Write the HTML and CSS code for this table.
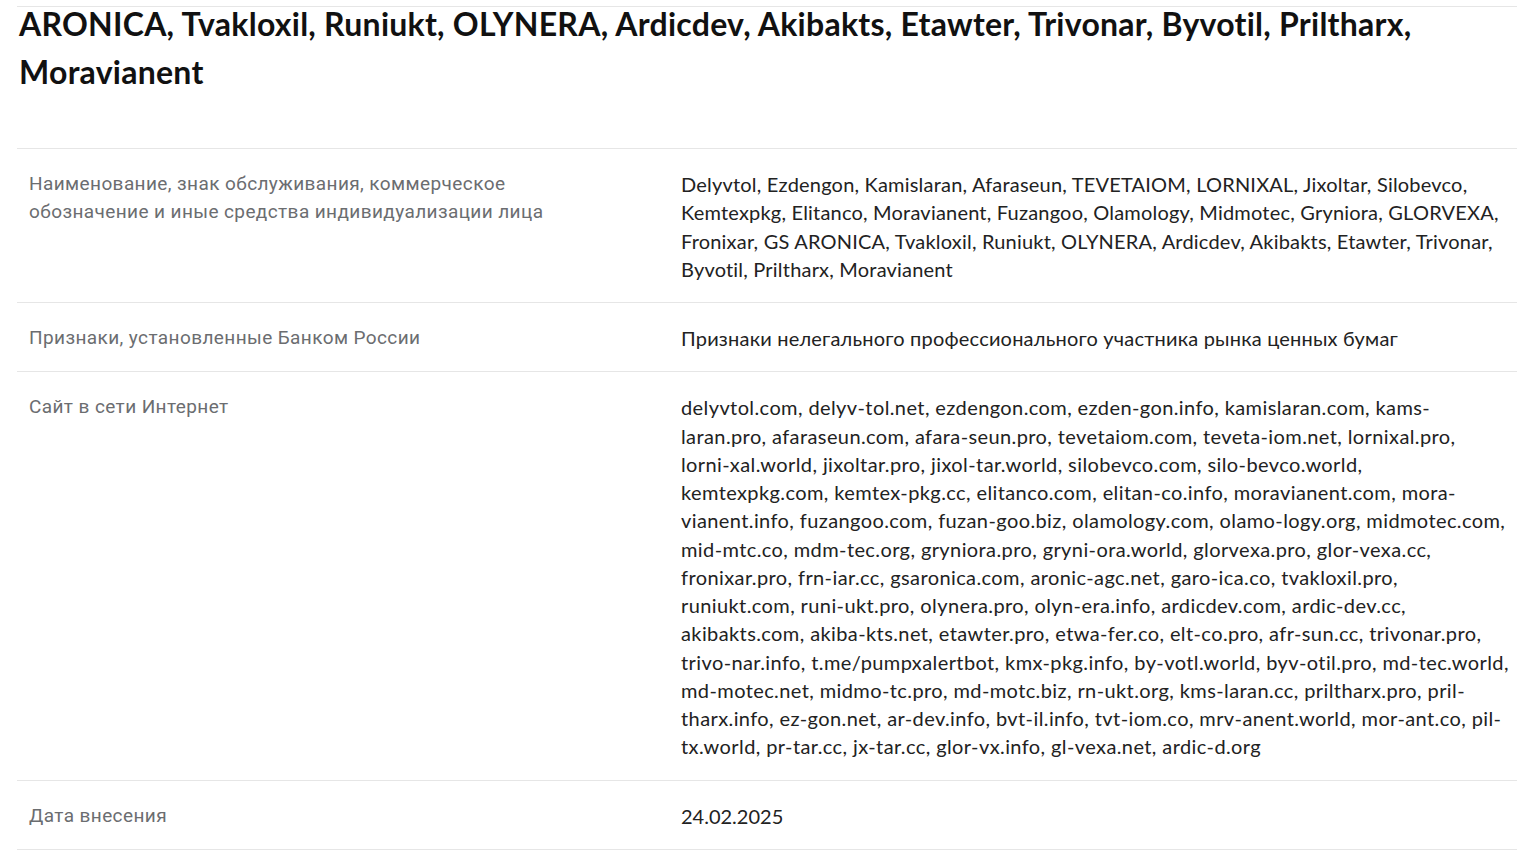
FILE: index.html
```html
<html>
<head>
	<title>Реестр</title>
	<link rel="stylesheet" href="styles.css">
</head>
<body>
	<div class="card">
		<h1 class="card-title">ARONICA, Tvakloxil, Runiukt, OLYNERA, Ardicdev, Akibakts, Etawter, Trivonar, Byvotil, Priltharx, Moravianent</h1>
		<div class="info">
			<div class="info-row">
				<div class="info-label">Наименование, знак обслуживания, коммерческое обозначение и иные средства индивидуализации лица</div>
				<div class="info-value">Delyvtol, Ezdengon, Kamislaran, Afaraseun, TEVETAIOM, LORNIXAL, Jixoltar, Silobevco, Kemtexpkg, Elitanco, Moravianent, Fuzangoo, Olamology, Midmotec, Gryniora, GLORVEXA, Fronixar, GS ARONICA, Tvakloxil, Runiukt, OLYNERA, Ardicdev, Akibakts, Etawter, Trivonar, Byvotil, Priltharx, Moravianent</div>
			</div>
			<div class="info-row">
				<div class="info-label">Признаки, установленные Банком России</div>
				<div class="info-value">Признаки нелегального профессионального участника рынка ценных бумаг</div>
			</div>
			<div class="info-row">
				<div class="info-label">Сайт в сети Интернет</div>
				<div class="info-value sites">delyvtol.com, delyv-tol.net, ezdengon.com, ezden-gon.info, kamislaran.com, kams-laran.pro, afaraseun.com, afara-seun.pro, tevetaiom.com, teveta-iom.net, lornixal.pro, lorni-xal.world, jixoltar.pro, jixol-tar.world, silobevco.com, silo-bevco.world, kemtexpkg.com, kemtex-pkg.cc, elitanco.com, elitan-co.info, moravianent.com, mora-vianent.info, fuzangoo.com, fuzan-goo.biz, olamology.com, olamo-logy.org, midmotec.com, mid-mtc.co, mdm-tec.org, gryniora.pro, gryni-ora.world, glorvexa.pro, glor-vexa.cc, fronixar.pro, frn-iar.cc, gsaronica.com, aronic-agc.net, garo-ica.co, tvakloxil.pro, runiukt.com, runi-ukt.pro, olynera.pro, olyn-era.info, ardicdev.com, ardic-dev.cc, akibakts.com, akiba-kts.net, etawter.pro, etwa-fer.co, elt-co.pro, afr-sun.cc, trivonar.pro, trivo-nar.info, t.me/pumpxalertbot, kmx-pkg.info, by-votl.world, byv-otil.pro, md-tec.world, md-motec.net, midmo-tc.pro, md-motc.biz, rn-ukt.org, kms-laran.cc, priltharx.pro, pril-tharx.info, ez-gon.net, ar-dev.info, bvt-il.info, tvt-iom.co, mrv-anent.world, mor-ant.co, pil-tx.world, pr-tar.cc, jx-tar.cc, glor-vx.info, gl-vexa.net, ardic-d.org</div>
			</div>
			<div class="info-row">
				<div class="info-label">Дата внесения</div>
				<div class="info-value date">24.02.2025</div>
			</div>
		</div>
	</div>
</body>
</html>
```
FILE: styles.css
```css
body {
	margin: 0;
	background: #fff;
	font-family: "Lato", "Noto Sans", sans-serif;
	color: #222;
}

.card {
	width: 1500px;
	margin: 6px 0 0 17px;
	border-top: 1px solid #e6e6e6;
}

.card-title {
	margin: -7px 0 52px 0;
	padding-left: 2px;
	font-size: 32px;
	line-height: 48px;
	font-weight: 700;
	letter-spacing: 0.25px;
	color: #111;
}

.info-row {
	display: grid;
	grid-template-columns: 652px 1fr;
	padding: 21px 7px 19px 12px;
	border-top: 1px solid #e6e6e6;
	line-height: 28.25px;
}

.info-row:last-child {
	border-bottom: 1px solid #e6e6e6;
}

.info-label {
	font-family: "Roboto", sans-serif;
	font-size: 19px;
	letter-spacing: 0.4px;
	color: #6b6d70;
	padding-right: 90px;
}

.info-value {
	font-size: 20px;
	letter-spacing: 0.2px;
	color: #222;
}

.info-value.sites {
	letter-spacing: 0.4px;
}

.info-value.date {
	letter-spacing: 0;
}
```
